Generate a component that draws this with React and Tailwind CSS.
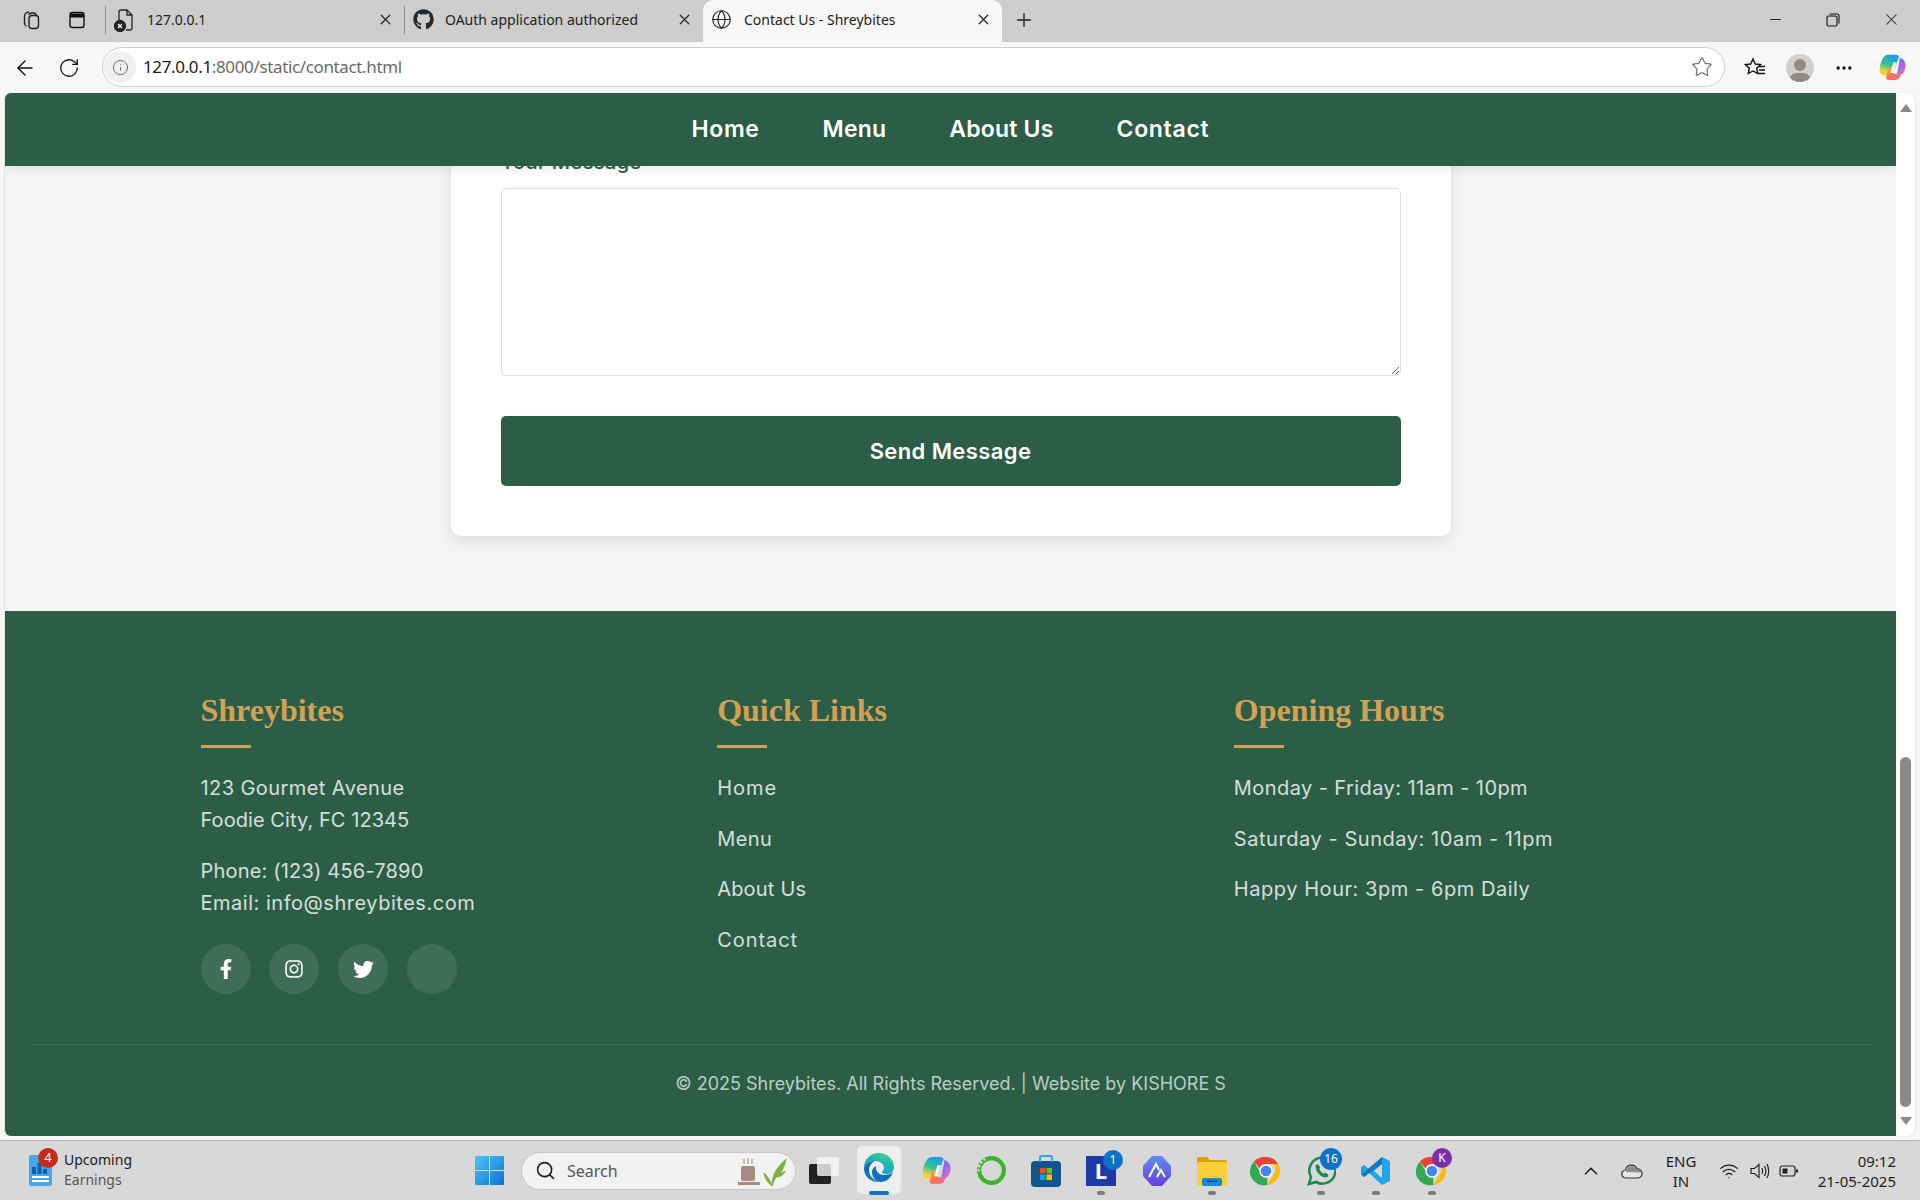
import React from "react";
import { FaGithub, FaFacebookF, FaInstagram, FaTwitter } from "react-icons/fa";
import { X, Plus, Minus, Globe, ArrowLeft, RotateCw, Info, Star, Search, ChevronUp, Wifi, MoreHorizontal } from "lucide-react";

const Copilot = ({ s = 28, id = "a" }) => (
  <svg width={s} height={s} viewBox="0 0 32 32">
    <defs>
      <linearGradient id={`cpa${id}`} x1="0.6" y1="0" x2="0.3" y2="1"><stop offset="0" stopColor="#1e9be8" /><stop offset="0.5" stopColor="#35c48a" /><stop offset="0.85" stopColor="#f0d53a" /></linearGradient>
      <linearGradient id={`cpb${id}`} x1="0.2" y1="0" x2="0.8" y2="1"><stop offset="0" stopColor="#3f7ff0" /><stop offset="0.55" stopColor="#a565ec" /><stop offset="1" stopColor="#e070d0" /></linearGradient>
      <linearGradient id={`cpc${id}`} x1="0" y1="0" x2="1" y2="1"><stop offset="0" stopColor="#f9b03a" /><stop offset="0.5" stopColor="#f4704e" /><stop offset="1" stopColor="#ea6ab4" /></linearGradient>
    </defs>
    <path d="M11 2h9c1.600 0 2.600.8 3 2.400L17 22c-.5 1.600-1.600 2.500-3.200 2.500H7C3 24.500 1 21 1.800 16.500 2.800 10 6 2 11 2z" fill={`url(#cpa${id})`} />
    <path d="M20 2.500c2 .2 3.400 1 4 3 3.600.2 6.500 3.600 6.500 8.500 0 3.800-1.500 7.500-4 9.500h-5.500L24 7c.3-2-1.500-4-4-4.500z" fill={`url(#cpb${id})`} />
    <path d="M11.500 16.500L9 26c-.5 2.200 1 3.800 3.200 3.800h7.300c3 0 5-2.300 6.300-6.800h-7.600c-1.500 0-2-.8-1.700-2l1.500-5z" fill={`url(#cpc${id})`} />
    <path d="M17 10.500h3.600L17 22h-3.500z" fill="#fff" />
  </svg>
);

const ChromeIcon = ({ s = 30 }) => (
  <svg width={s} height={s} viewBox="0 0 48 48">
    <path d="M24 3a21 21 0 0 1 18.200 10.500H24a10.500 10.500 0 0 0-9.600 6.300L6 9.800A21 21 0 0 1 24 3z" fill="#ea4335" />
    <path d="M42.200 13.500A21 21 0 0 1 26 45l9-15.500a10.500 10.500 0 0 0-1-16z" fill="#fbbc05" />
    <path d="M26 45A21 21 0 0 1 6 9.800L15 25.500a10.500 10.500 0 0 0 11 8z" fill="#34a853" />
    <circle cx="24" cy="24" r="10" fill="#fff" /><circle cx="24" cy="24" r="8" fill="#4285f4" />
  </svg>
);

const Dot = () => <span className="w-[8px] h-[4px] rounded-full bg-[#7a7a7a]" />;

const TaskCell = ({ children, w = 55, dot }) => (
  <div className="relative h-[60px] flex items-center justify-center shrink-0" style={{ width: w }}>
    {children}
    {dot && <span className="absolute bottom-[6px] flex"><Dot /></span>}
  </div>
);

const Badge = ({ children, c = "bg-[#0a73c9]", cls = "" }) => (
  <span className={`absolute flex items-center justify-center rounded-full text-white text-[12px] leading-none ${c} ${cls}`}>{children}</span>
);

const NavLink = ({ children, cls = "tracking-[0.2px]" }) => <a className={`text-white text-[23px] font-semibold ${cls}`}>{children}</a>;

const Col = ({ title, children }) => (
  <div className="flex flex-col">
    <h3 className="font-['Liberation_Serif',serif] font-bold text-[#d4a056] text-[32px] leading-[46px] tracking-normal">{title}</h3>
    <div className="w-[50px] h-[3px] bg-[#d4a056] mt-[12px] mb-[24px]" />
    {children}
  </div>
);

export default function App() {
  return (
    <div className="w-[1920px] h-[1200px] overflow-hidden flex flex-col bg-[#f7f7f7] font-['Inter',sans-serif]">
      {/* tab strip */}
      <div className="h-[42px] bg-[#cdcdcd] flex items-center pb-[3px] text-[14px] font-['Noto_Sans',sans-serif] text-[#222] shrink-0 relative">
        <div className="w-[105px] flex items-center pl-[21px] gap-[26px]">
          <svg width="20" height="20" viewBox="0 0 20 20" fill="none" stroke="#222" strokeWidth="1.400"><rect x="8" y="5.500" width="9.500" height="13" rx="3" /><path d="M5.500 16.500c-1.200-.7-2-1.800-2-3.500V6.500c0-2.500 2-4.500 4.500-4.500M8 5c0-1 1-2 2.500-2h2c1.500 0 2.500 1 3 2" /></svg>
          <svg width="20" height="20" viewBox="0 0 20 20" fill="none" stroke="#111" strokeWidth="1.400"><rect x="3" y="2.500" width="14" height="15" rx="2.500" /><path d="M3 5.500h14" strokeWidth="4" /></svg>
        </div>
        <div className="w-[299px] h-[28px] border-l border-[#8c8c8c] flex items-center pl-[8px]">
          <svg width="20" height="24" viewBox="0 0 20 24" fill="none" stroke="#222" strokeWidth="1.300"><path d="M12 22h4c1.300 0 2-1 2-2V7l-5-5H7C5.500 2 5 3 5 4v8M13 2v5h5" /><circle cx="6" cy="18" r="5.500" fill="#222" /><path d="M4 16l4 4M8 16l-4 4" stroke="#fff" /></svg>
          <span className="ml-[13px] flex-1">127.0.0.1</span>
          <X size={17} strokeWidth={1.700} className="mr-[10px]" />
        </div>
        <div className="w-[299px] h-[28px] border-l border-[#8c8c8c] flex items-center pl-[8px]">
          <FaGithub size={21} color="#24292e" />
          <span className="ml-[11px] flex-1">OAuth application authorized</span>
          <X size={17} strokeWidth={1.700} className="mr-[10px]" />
        </div>
        <div className="w-[299px] h-[48px] self-start bg-[#f7f7f7] rounded-t-[10px] flex items-center pl-[8px] pb-[9px]">
          <Globe size={21} strokeWidth={1.300} color="#222" />
          <span className="ml-[12px] flex-1">Contact Us - Shreybites</span>
          <X size={17} strokeWidth={1.700} className="mr-[10px]" />
        </div>
        <Plus size={22} strokeWidth={1.500} className="ml-[11px]" />
        <div className="ml-auto flex items-center">
          <div className="w-[58px] flex justify-center"><Minus size={17} strokeWidth={1.400} /></div>
          <div className="w-[58px] flex justify-center">
            <svg width="14" height="14" viewBox="0 0 14 14" fill="none" stroke="#111" strokeWidth="1.100"><rect x="1" y="3" width="10" height="10" rx="1.500" /><path d="M3.500 1h7.500c1 0 2 1 2 2v7.500" /></svg>
          </div>
          <div className="w-[58px] flex justify-center"><X size={19} strokeWidth={1.300} /></div>
        </div>
      </div>

      {/* toolbar */}
      <div className="h-[51px] shrink-0 flex items-center relative">
        <div className="w-[102px] flex items-center pl-[13px] gap-[21px]">
          <ArrowLeft size={24} strokeWidth={1.400} color="#111" />
          <RotateCw size={22} strokeWidth={1.400} color="#111" />
        </div>
        <div className="w-[1623px] h-[40px] mt-[-1px] rounded-full border border-[#cfcfcf] bg-white flex items-center">
          <div className="ml-[1px] w-[32px] h-[32px] rounded-full bg-[#f0f0f0] flex items-center justify-center"><Info size={17} strokeWidth={1.200} color="#555" /></div>
          <span className="ml-[7px] text-[17px] font-['Noto_Sans',sans-serif] text-[#6a6a6a] tracking-[-0.36px]"><span className="text-[#1a1a1a]">127.0.0.1</span>:8000/static/contact.html</span>
          <Star size={22} strokeWidth={1.200} color="#666" className="ml-auto mr-[11px]" />
        </div>
        <div className="ml-[19px] flex items-center gap-[20px]">
          <svg width="22" height="22" viewBox="0 0 22 22" fill="none" stroke="#111" strokeWidth="1.400"><path d="M9 2l2.300 5 5.200.6-3.800 3.600 1 5.300L9 14l-4.700 2.500 1-5.300-3.800-3.600 5.200-.6z" /><path d="M15 9.500h6M15 13h6M14 16.500h7" /></svg>
          <div className="w-[28px] h-[28px] rounded-full bg-[#d2d0cc] flex flex-col items-center overflow-hidden">
            <span className="w-[12px] h-[12px] rounded-full bg-[#8f8b87] mt-[5px] shrink-0" />
            <span className="w-[20px] h-[12px] rounded-full bg-[#8f8b87] mt-[2px] shrink-0" />
          </div>
          <MoreHorizontal size={20} strokeWidth={2} color="#111" />
          <span className="ml-[4px] flex"><Copilot s={29} id="t" /></span>
        </div>
      </div>

      {/* page + scrollbar */}
      <div className="h-[1043px] shrink-0 flex pl-[5px] pr-[5px]">
        <div className="w-[1891px] h-[1043px] flex flex-col overflow-hidden rounded-l-[6px] bg-[#f5f5f5] shadow-[-1px_0_0_#e2e2e2]">
          <header className="relative z-10 h-[73px] shrink-0 bg-[#2b5d47] flex items-center justify-center gap-[63px] shadow-[0_2px_10px_rgba(0,0,0,0.1)]">
            <NavLink cls="tracking-[0.6px]">Home</NavLink>
            <NavLink>Menu</NavLink>
            <NavLink>About Us</NavLink>
            <NavLink cls="tracking-[0.7px]">Contact</NavLink>
          </header>
          <main className="h-[445px] shrink-0 flex justify-center">
            <div className="w-[1000px] h-[390px] mt-[-20px] px-[50px] bg-white rounded-b-[10px] shadow-[0_5px_15px_rgba(0,0,0,0.1)] flex flex-col">
              <label className="text-[20px] leading-[32px] text-[#2b5d47] font-medium tracking-[0.4px] block mb-[10px]">Your Message</label>
              <textarea className="w-[900px] h-[188px] border border-[#dddddd] rounded-[5px] block shrink-0" />
              <button className="w-[900px] h-[70px] mt-[40px] rounded-[5px] bg-[#2b5d47] text-white text-[22px] font-semibold tracking-[0.4px] flex items-center justify-center">Send Message</button>
            </div>
          </main>
          <footer className="h-[525px] shrink-0 bg-[#2b5d47] pt-[76px] flex flex-col text-[20px] leading-[32px] text-white/80">
            <div className="h-[357px] shrink-0 w-[1500px] mx-auto grid grid-cols-3 gap-[50px] tracking-[0.42px]">
              <Col title="Shreybites">
                <p>123 Gourmet Avenue<br /><span className="tracking-[0.07px]">Foodie City, FC 12345</span></p>
                <p className="mt-[19px]"><span className="tracking-[0.19px]">Phone: (123) 456-7890</span><br /><span className="tracking-[0.52px]">Email: info@shreybites.com</span></p>
                <div className="flex gap-[18.900px] mt-[25px]">
                  <a className="w-[50px] h-[50px] rounded-full bg-white/10 flex items-center justify-center"><FaFacebookF size={20} color="#fff" /></a>
                  <a className="w-[50px] h-[50px] rounded-full bg-white/10 flex items-center justify-center"><FaInstagram size={20} color="#fff" /></a>
                  <a className="w-[50px] h-[50px] rounded-full bg-white/10 flex items-center justify-center"><FaTwitter size={21} color="#fff" /></a>
                  <a className="w-[50px] h-[50px] rounded-full bg-white/10" />
                </div>
              </Col>
              <Col title="Quick Links">
                <div className="flex flex-col gap-[18.700px]">
                  <a className="tracking-[1px]">Home</a><a>Menu</a><a className="tracking-[0.2px]">About Us</a><a className="tracking-[0.95px]">Contact</a>
                </div>
              </Col>
              <Col title="Opening Hours">
                <div className="flex flex-col gap-[18.700px]">
                  <p>Monday - Friday: 11am - 10pm</p>
                  <p className="tracking-[0.55px]">Saturday - Sunday: 10am - 11pm</p>
                  <p className="tracking-[0.55px]">Happy Hour: 3pm - 6pm Daily</p>
                </div>
              </Col>
            </div>
            <div className="mx-[25px] border-t border-white/10 pt-[23px] text-center text-[18px] text-white/70">© 2025 Shreybites. All Rights Reserved. | Website by KISHORE S</div>
          </footer>
        </div>
        <div className="w-[19px] bg-white rounded-r-[8px] flex flex-col items-center pt-[11px] pb-[11px] shadow-[1px_0_2px_rgba(0,0,0,0.08)]">
          <span className="w-0 h-0 border-x-[6px] border-x-transparent border-b-[8px] border-b-[#8a8a8a]" />
          <div className="flex-1" />
          <div className="w-[11px] h-[350px] rounded-full bg-[#8a8a8a]" />
          <span className="mt-[10px] w-0 h-0 border-x-[6px] border-x-transparent border-t-[8px] border-t-[#8a8a8a]" />
        </div>
      </div>

      {/* taskbar */}
      <div className="mt-[4px] h-[60px] shrink-0 border-t border-[#b4b4b4] bg-[#d8d8d8] flex items-center relative font-['Noto_Sans',sans-serif]">
        <div className="w-[475px] flex items-center pl-[29px] relative">
          <svg width="23" height="31" viewBox="0 0 23 31"><rect width="23" height="31" rx="2" fill="#45a9ec" /><path d="M3 19v-7h4v7zM8.500 19V8h4v11zM14 19v-5h4v5z" fill="#0f5fb0" /><path d="M3 22h17M3 26h17" stroke="#fff" strokeWidth="2" /></svg>
          <Badge c="bg-[#c42b1c]" cls="w-[20px] h-[20px] left-[38px] top-[-4px] text-[13px]">4</Badge>
          <div className="ml-[12px] mt-[-2px] text-[14px] leading-[20px]">
            <div className="text-[#1a1a1a]">Upcoming</div>
            <div className="text-[#555]">Earnings</div>
          </div>
        </div>
        <svg width="29" height="29" viewBox="0 0 29 29" className="shrink-0"><defs><linearGradient id="wn" x1="0" y1="0" x2="1" y2="1"><stop offset="0" stopColor="#4fc3f7" /><stop offset="1" stopColor="#0a72d0" /></linearGradient></defs><path d="M0 1a1 1 0 0 1 1-1h13v14H0zM15 0h13a1 1 0 0 1 1 1v13H15zM0 15h14v14H1a1 1 0 0 1-1-1zM15 15h14v13a1 1 0 0 1-1 1H15z" fill="url(#wn)" /></svg>
        <div className="ml-[17px] w-[275px] h-[38px] rounded-full bg-[#f2f2f2] border border-[#c8c8c8] flex items-center shrink-0">
          <Search size={21} strokeWidth={1.800} color="#222" className="ml-[13px]" />
          <span className="ml-[11px] text-[16px] text-[#555]">Search</span>
          <svg width="60" height="34" viewBox="0 0 60 34" className="ml-auto mr-[5px]"><rect x="11" y="12" width="14" height="15" rx="2" fill="#a98a80" /><rect x="8" y="28" width="22" height="3" fill="#a98a80" /><path d="M14 5v5M18 4v6M22 5v5" stroke="#888" /><path d="M42 32c0-10 4-18 14-27-2 9-4 13-9 17M42 32c-2-6-4-9-8-13 1 5 3 9 8 13M46 20c3 0 6-1 9-3-1 3-4 6-9 6" fill="#7cb342" stroke="#7cb342" /></svg>
        </div>
        <div className="flex items-center">
          <TaskCell w={55}>
            <svg width="30" height="27" viewBox="0 0 30 27"><rect x="0" y="7" width="22" height="20" rx="2" fill="#222" /><rect x="8" y="0" width="22" height="19" rx="2" fill="#f8f8f8" opacity=".8" /></svg>
          </TaskCell>
          <TaskCell w={57}>
            <span className="absolute left-[6px] top-[5px] w-[43px] h-[48px] rounded-[5px] bg-[#eeeeee] flex justify-center shadow-[2px_0_0_#e4e4e4]">
              <svg width="32" height="32" viewBox="0 0 32 32" className="mt-[6px]"><defs><linearGradient id="ed" x1="0.8" y1="0" x2="0.3" y2="0.8"><stop offset="0" stopColor="#40d58a" /><stop offset="1" stopColor="#1197d8" /></linearGradient><linearGradient id="ed2" x1="0" y1="0" x2="1" y2="1"><stop offset="0" stopColor="#0d5ea8" /><stop offset="1" stopColor="#1b8ad8" /></linearGradient></defs><path d="M1 16C1 7 8 1 16 1c9 0 15 7 15 14 0 4-3 7-7 7-3 0-5-1-5-2 0-1 2-1 2-4 0-4-4-7-9-7-5 0-9 3-11 7z" fill="url(#ed)" /><path d="M1 16c2-4 6-7 11-7-4 2-6 5-6 9 0 6 5 11 12 12C8 31 1 25 1 16z" fill="url(#ed2)" /><path d="M18 30c-6-1-9-5-9-10 0-3 2-5 4-6-1 5 3 9 8 9 4 0 7-1 9-3-2 6-7 10-12 10z" fill="#0f6fc0" /></svg>
              <span className="absolute bottom-[-1px] w-[20px] h-[4px] rounded-full bg-[#0a73c9]" />
            </span>
          </TaskCell>
          <TaskCell w={56}><Copilot s={31} id="b" /></TaskCell>
          <TaskCell w={54}><svg width="31" height="31" viewBox="0 0 30 30" fill="none"><circle cx="15" cy="15" r="12" stroke="#3cb32f" strokeWidth="4" /><path d="M9 4a12 12 0 0 0-6 13M5 6a14 14 0 0 0-3 8" stroke="#d8d8d8" strokeWidth="2" strokeDasharray="2 2" /></svg></TaskCell>
          <TaskCell w={55}><svg width="30" height="32" viewBox="0 0 30 32"><rect y="6" width="30" height="26" rx="4" fill="#12558c" /><path d="M9 7V3a2 2 0 0 1 2-2h8a2 2 0 0 1 2 2v4" fill="none" stroke="#2aa9e0" strokeWidth="2" /><rect x="9" y="13" width="5.500" height="5.500" fill="#f25022" /><rect x="15.500" y="13" width="5.500" height="5.500" fill="#7fba00" /><rect x="9" y="19.500" width="5.500" height="5.500" fill="#00a4ef" /><rect x="15.500" y="19.500" width="5.500" height="5.500" fill="#ffb900" /></svg></TaskCell>
          <TaskCell w={56} dot>
            <span className="w-[30px] h-[30px] bg-[#1e3aa8] text-white font-bold text-[22px] flex items-center justify-center">L</span>
            <Badge cls="w-[20px] h-[20px] right-[6px] top-[9px]">1</Badge>
          </TaskCell>
          <TaskCell w={55}><svg width="30" height="32" viewBox="0 0 30 32"><defs><linearGradient id="al" x1="0" y1="0" x2="0" y2="1"><stop offset="0" stopColor="#5b8ef0" /><stop offset="1" stopColor="#6a3fe0" /></linearGradient></defs><path d="M10 1h10l9 10v10l-9 10H10L1 21V11z" fill="url(#al)" /><path d="M7 22l7-13 3 6M15 22l4-7 4 7" fill="none" stroke="#fff" strokeWidth="2" /></svg></TaskCell>
          <TaskCell w={55} dot><svg width="30" height="30" viewBox="0 0 30 30"><path d="M0 3a2 2 0 0 1 2-2h8l3 3h15a2 2 0 0 1 2 2v3H0z" fill="#e0a100" /><rect y="6" width="30" height="24" rx="2" fill="#fcd03a" /><rect x="5" y="22" width="20" height="8" rx="2" fill="#1388d5" /><rect x="10" y="24.500" width="10" height="1.500" fill="#0b4d80" /></svg></TaskCell>
          <TaskCell w={54}><ChromeIcon s={32} /></TaskCell>
          <TaskCell w={55} dot>
            <svg width="30" height="32" viewBox="0 0 30 32" fill="none"><path d="M3 29l2-7a13 13 0 1 1 5 5z" stroke="#1d8a56" strokeWidth="2.600" /><path d="M10 10c2-2 3 0 4 2 .5 1-1 1.500-.5 2.500 1 2 2 3 4 4 1 .5 1.500-1 2.500-.5 2 1 3 2.500 1.500 4-3 2-12-2-12-12z" fill="#1d8a56" /></svg>
            <Badge cls="w-[22px] h-[22px] right-[6px] top-[7px]">16</Badge>
          </TaskCell>
          <TaskCell w={56} dot><svg width="30" height="30" viewBox="0 0 30 30"><path d="M21 1l8 4v20l-8 4L8 17l-5 4-3-2v-8l3-2 5 4z" fill="#23a4e8" /><path d="M21 8l-8 7 8 7z" fill="#d8d8d8" /><path d="M21 1L1 18l2 3L21 8z" fill="#0f6fb8" opacity=".85" /></svg></TaskCell>
          <TaskCell w={55} dot>
            <ChromeIcon s={32} />
            <Badge c="bg-[#7b2fa8]" cls="w-[20px] h-[20px] right-[7px] top-[7px] text-[10px]">K</Badge>
          </TaskCell>
        </div>
        <div className="ml-auto flex items-center pr-[24px] text-[#1f1f1f]">
          <ChevronUp size={22} strokeWidth={1.800} color="#222" />
          <svg width="22" height="16" viewBox="0 0 22 16" className="ml-[19px]" fill="none" stroke="#333" strokeWidth="1.200"><path d="M5 15a4 4 0 0 1-.5-8A6 6 0 0 1 16 6a4.500 4.500 0 0 1 1 9z" fill="#e6e6e6" /><path d="M5 9a6 6 0 0 1 11-3c2 0 4 1.500 4.500 3.500z" fill="#8b8b8b" stroke="none" /></svg>
          <div className="ml-[11px] w-[54px] text-center text-[15px] leading-[20px]">ENG<br />IN</div>
          <Wifi size={20} strokeWidth={1.500} color="#222" className="ml-[11px]" />
          <svg width="20" height="18" viewBox="0 0 20 18" className="ml-[11px]" fill="none" stroke="#222" strokeWidth="1.200"><path d="M1 6.500h3.500L9 2.500v13l-4.500-4H1zM12 6c1 2 1 4 0 6M14.500 4c1.600 3 1.600 7 0 10M17 2c2.200 4 2.200 10 0 14" /></svg>
          <svg width="20" height="14" viewBox="0 0 20 14" className="ml-[9px]" fill="none" stroke="#222" strokeWidth="1.200"><rect x="1" y="2" width="15" height="10" rx="2.500" /><rect x="3.500" y="4.500" width="5" height="5" fill="#222" stroke="none" /><path d="M18 5.500v3" strokeWidth="2" /></svg>
          <div className="ml-[18px] text-right text-[15px] leading-[20px] w-[79px]">09:12<br />21-05-2025</div>
        </div>
      </div>
    </div>
  );
}
